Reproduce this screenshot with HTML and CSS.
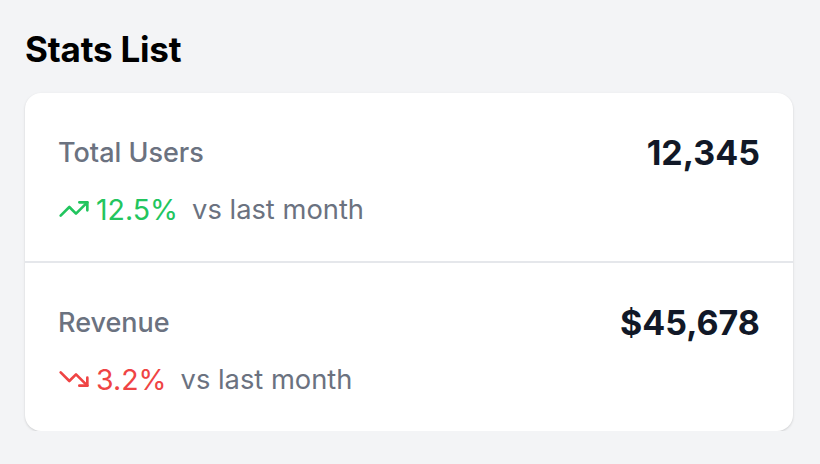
FILE: index.html
```html
<!DOCTYPE html>
<html lang="en">
<head>
<meta charset="utf-8">
<title>Stats List</title>
<link rel="stylesheet" href="styles.css">
</head>
<body>
<main class="page">
  <h1 class="title">Stats List</h1>
  <section class="card">
    <div class="row">
      <div class="info">
        <div class="label">Total Users</div>
        <div class="change">
          <span class="trend up">
            <svg class="icon" viewBox="0 0 24 24" fill="none" stroke="currentColor" stroke-width="2" stroke-linecap="round" stroke-linejoin="round"><polyline points="22 7 13.5 15.5 8.5 10.5 2 17"/><polyline points="16 7 22 7 22 13"/></svg>
            <span class="pct">12.5%</span>
          </span>
          <span class="vs">vs last month</span>
        </div>
      </div>
      <div class="value">12,345</div>
    </div>
    <div class="row">
      <div class="info">
        <div class="label">Revenue</div>
        <div class="change">
          <span class="trend down">
            <svg class="icon" viewBox="0 0 24 24" fill="none" stroke="currentColor" stroke-width="2" stroke-linecap="round" stroke-linejoin="round"><polyline points="22 17 13.5 8.5 8.5 13.5 2 7"/><polyline points="16 17 22 17 22 11"/></svg>
            <span class="pct">3.2%</span>
          </span>
          <span class="vs">vs last month</span>
        </div>
      </div>
      <div class="value">$45,678</div>
    </div>
  </section>
</main>
</body>
</html>
```
FILE: styles.css
```css
html, body {
  margin: 0;
  padding: 0;
  background: #f3f4f6;
  font-family: Inter, "Liberation Sans", Arial, sans-serif;
}
.page {
  padding: 25px 27px 0 25px;
}
.title {
  margin: 0 0 20px 0;
  font-size: 35px;
  line-height: 48px;
  font-weight: 700;
  color: #000;
  letter-spacing: -0.2px;
}
.card {
  background: #fff;
  border-radius: 16px;
  box-shadow: 0 1px 3px rgba(0,0,0,0.1), 0 1px 2px rgba(0,0,0,0.06);
  overflow: hidden;
}
.row {
  display: flex;
  justify-content: space-between;
  align-items: flex-start;
  padding: 40px 33px 32px 33px;
}
.row + .row {
  border-top: 2px solid #e5e7eb;
}
.label {
  font-size: 27px;
  line-height: 40px;
  color: #6b7280;
  font-weight: 500;
}
.change {
  margin-top: 16px;
  display: flex;
  align-items: center;
  height: 40px;
  font-size: 27.3px;
}
.trend {
  display: flex;
  align-items: center;
}
.trend.up { color: #22c55e; }
.trend.down { color: #ef4444; }
.pct {
  font-size: 28.5px;
  font-weight: 400;
}
.icon {
  width: 32px;
  height: 32px;
  margin-right: 6px;
}
.vs {
  margin-left: 14px;
  color: #6b7280;
}
.value {
  font-size: 34px;
  line-height: 40px;
  font-weight: 700;
  color: #111827;
}
```
